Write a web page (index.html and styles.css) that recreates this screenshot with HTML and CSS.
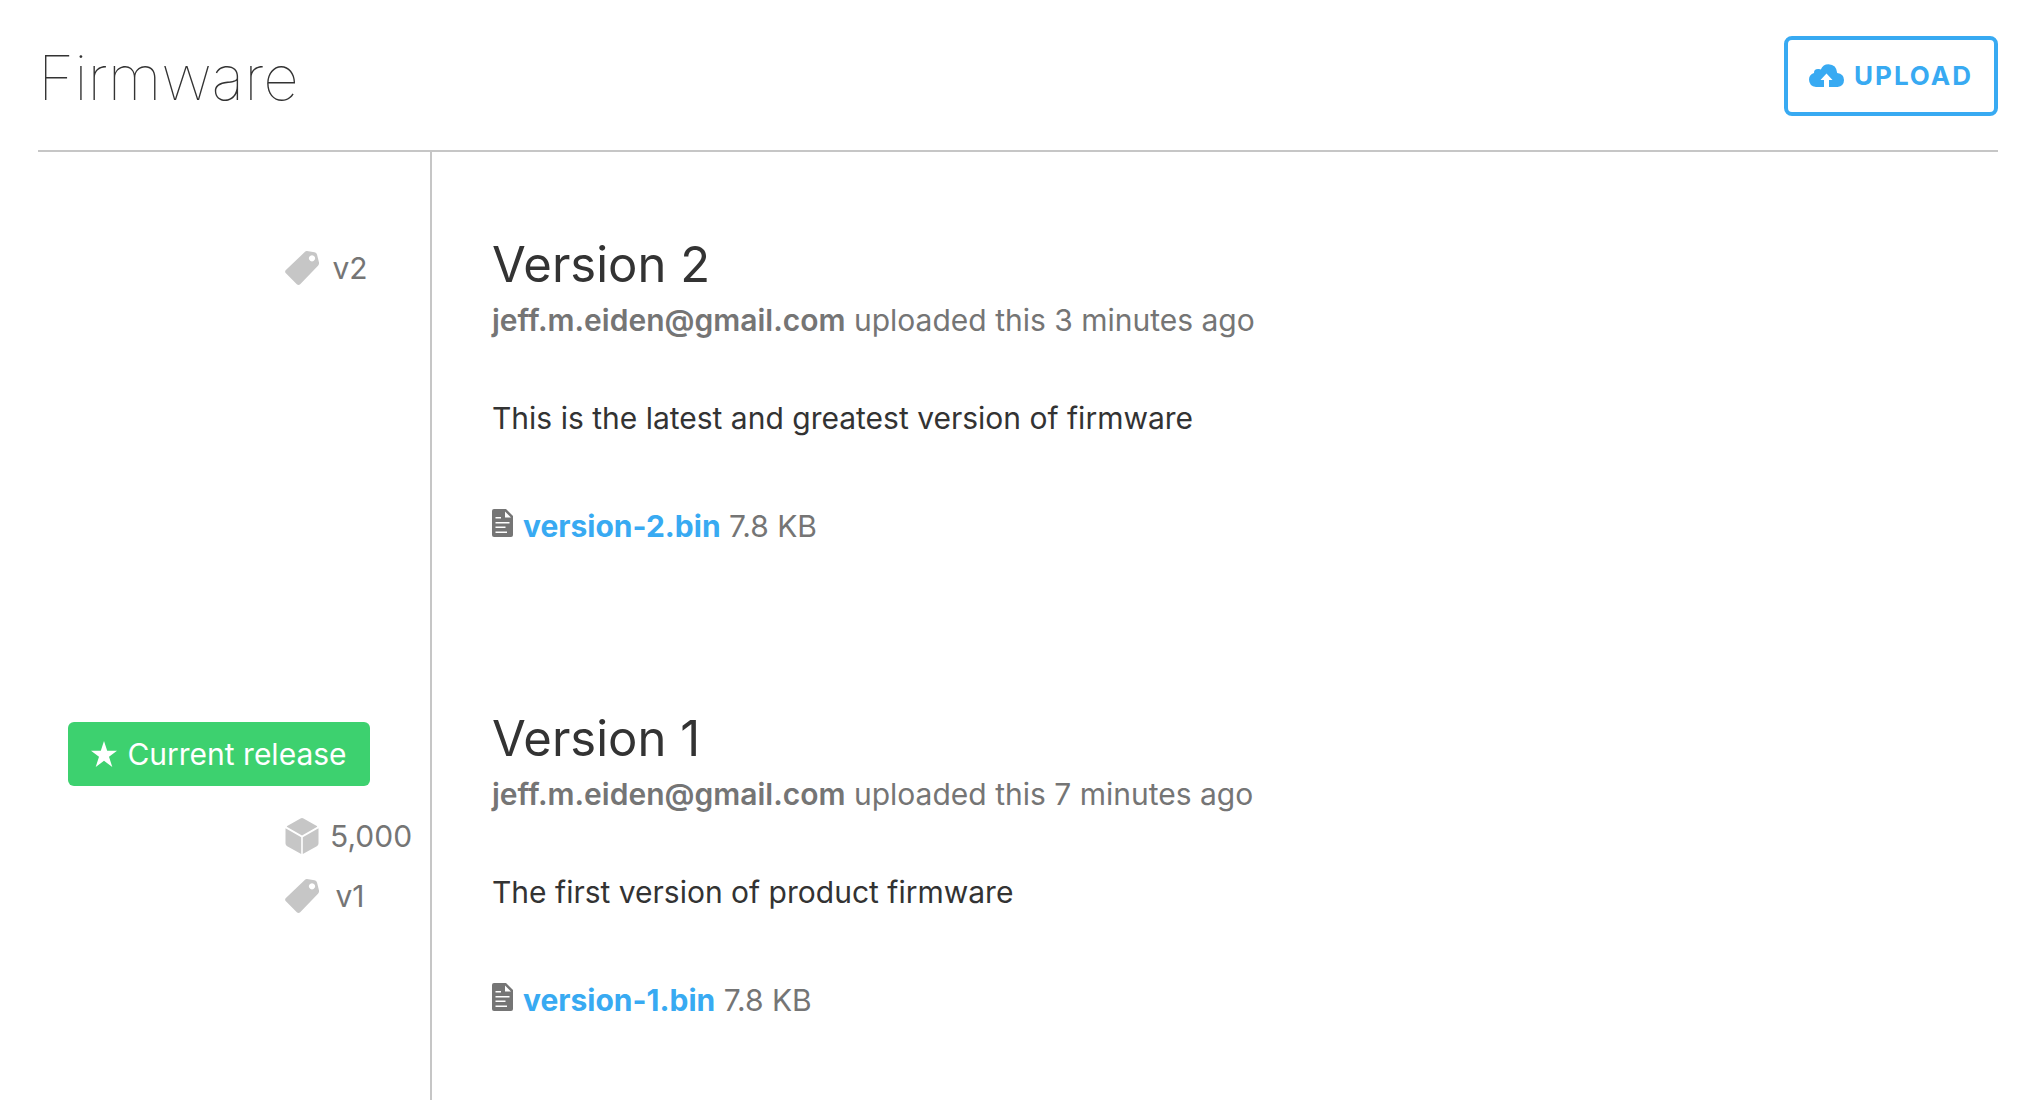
FILE: index.html
```html
<!DOCTYPE html>
<html lang="en">
<head>
<meta charset="utf-8">
<title>Firmware</title>
<link rel="stylesheet" href="styles.css">
</head>
<body>
<svg class="defs" aria-hidden="true">
  <symbol id="tag" viewBox="0 0 34 34"><path fill-rule="evenodd" d="M20 .8Q20.900 0 22 .1L29.500 1.300Q31.500 1.600 32 3.400L34 11.500Q34.300 13.400 33 14.800L15.200 33.200Q13.500 34.700 11.800 33.200L.9 22.300Q-.7 20.600 .9 19ZM27 4.200a3.100 3.100 0 1 0 .01 0Z"/></symbol>
  <symbol id="file" viewBox="0 0 22 28"><path d="M2 0H14L21 7V26Q21 28 19 28H2Q0 28 0 26V2Q0 0 2 0Z"/><path fill="#fff" d="M13 2.500V8.500H19ZM3.500 8h5.500v1.400H3.500zM3.500 13h14v1.400h-14zM3.500 17.500h10v1.400h-10zM3.500 22.500h11.500v1.400H3.500z"/></symbol>
</svg>
<header class="page-header">
  <h1 class="title">Firmware</h1>
  <button class="upload" type="button">
    <svg class="cloud" viewBox="0 0 35 24" aria-hidden="true"><path fill="currentColor" d="M7 23Q0 22 0 15.500Q0 10.500 5 9Q4.800 4.500 10 5Q11 5 11.800 5.500Q14 .2 19.500 .2Q27.500 .5 28.200 9Q35 10 35 16Q35 22 28.500 23H20V16H23.500L17.500 9.500L11.500 16H15V23Z"/></svg>
    <span>UPLOAD</span>
  </button>
</header>
<main class="timeline">
  <article class="entry">
    <aside class="meta">
      <div class="stat"><svg class="tag" aria-hidden="true"><use href="#tag"/></svg><span class="label">v2</span></div>
    </aside>
    <section class="details">
      <h2 class="name">Version 2</h2>
      <p class="byline"><strong>jeff.m.eiden@gmail.com</strong> uploaded this 3 minutes ago</p>
      <p class="description">This is the latest and greatest version of firmware</p>
      <p class="file"><svg class="file-icon" aria-hidden="true"><use href="#file"/></svg><a href="#version-2">version-2.bin</a> <span>7.8 KB</span></p>
    </section>
  </article>
  <article class="entry">
    <aside class="meta">
      <div class="badge"><svg class="star" viewBox="0 0 26 26" aria-hidden="true"><path fill="currentColor" d="M13 0L16.200 9.800H26L18 15.800L21.300 26L13 19.800L4.700 26L8 15.800L0 9.800H9.800Z"/></svg><span>Current release</span></div>
      <div class="stat"><svg class="cube" viewBox="0 0 34 36" aria-hidden="true"><path d="M15.500 .5Q17 -.3 18.500 .5L31.800 8Q32.500 8.500 31.800 9L17 17.400L2.200 9Q1.500 8.500 2.200 8ZM.5 10.300L16.200 19.300V36L2.200 28.300Q.5 27.300 .5 25.500ZM33.500 10.300L17.800 19.300V36L31.800 28.300Q33.500 27.300 33.500 25.500Z"/></svg><span class="label">5,000</span></div>
      <div class="stat"><svg class="tag" aria-hidden="true"><use href="#tag"/></svg><span class="label">v1</span></div>
    </aside>
    <section class="details">
      <h2 class="name">Version 1</h2>
      <p class="byline"><strong>jeff.m.eiden@gmail.com</strong> uploaded this 7 minutes ago</p>
      <p class="description">The first version of product firmware</p>
      <p class="file"><svg class="file-icon" aria-hidden="true"><use href="#file"/></svg><a href="#version-1">version-1.bin</a> <span>7.8 KB</span></p>
    </section>
  </article>
</main>
</body>
</html>
```

FILE: styles.css
```css
* { box-sizing: border-box; }
body {
  margin: 0;
  padding: 0 28px 20px 38px;
  background: #fff;
  color: #333;
  font: 400 30px/40px Inter, sans-serif;
}
h1, h2, p { margin: 0; }
.defs { display: block; width: 0; height: 0; }
.page-header {
  display: flex;
  justify-content: space-between;
  align-items: flex-start;
  min-height: 152px;
  padding-top: 36px;
  border-bottom: 2px solid #c6c6c6;
}
.title {
  font-size: 62px;
  line-height: 84px;
  font-weight: 100;
}
.upload {
  display: flex;
  align-items: center;
  justify-content: center;
  gap: 10px;
  min-width: 214px;
  height: 80px;
  padding: 0 16px;
  border: 4px solid #38aaf2;
  border-radius: 8px;
  background: #fff;
  color: #38aaf2;
  font: 700 26px/40px Inter, sans-serif;
  letter-spacing: 2px;
}
.cloud { width: 35px; height: 24px; flex: none; }
.entry {
  display: grid;
  grid-template-columns: 392px 1fr;
  min-height: 474px;
}
.meta {
  display: flex;
  flex-direction: column;
  align-items: flex-end;
  gap: 20px;
  padding: 96px 60px 0 0;
}
.stat {
  display: flex;
  align-items: center;
  gap: 11px;
  color: #757575;
}
.stat svg { width: 34px; fill: #c6c6c6; }
.tag { height: 34px; }
.cube { height: 36px; }
.label {
  width: 40px;
  text-align: center;
}
.badge {
  display: flex;
  align-items: center;
  justify-content: center;
  gap: 10px;
  min-width: 302px;
  height: 64px;
  margin-bottom: 10px;
  border-radius: 6px;
  background: #3dd16f;
  color: #fff;
}
.star { width: 26px; height: 26px; }
.details {
  padding: 80px 0 0 60px;
  border-left: 2px solid #c6c6c6;
}
.name {
  font-size: 49px;
  line-height: 66px;
  font-weight: 400;
}
.byline {
  margin-top: 2px;
  color: #757575;
}
.byline strong { font-weight: 600; }
.description { margin-top: 58px; }
.file {
  margin-top: 68px;
  color: #757575;
}
.file-icon {
  width: 22px;
  height: 28px;
  margin-right: 9px;
  fill: #757575;
}
.file a {
  color: #38aaf2;
  font-weight: 700;
  text-decoration: none;
}
```
